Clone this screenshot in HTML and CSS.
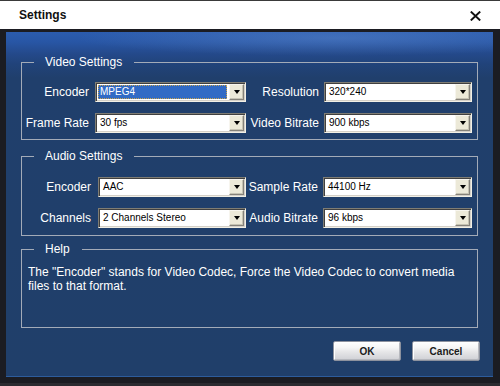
FILE: index.html
```html
<!DOCTYPE html>
<html lang="en">
<head>
    <meta charset="UTF-8">
    <meta name="viewport" content="width=device-width, initial-scale=1.0">
    <title>Settings</title>
    <link rel="stylesheet" href="styles.css">
</head>
<body>
    <div class="window">
        <div class="titlebar">
            <span class="title">Settings</span>
            <svg class="close" width="11" height="10" viewBox="0 0 11 10">
                <path d="M0.8 0.6 L10.2 9.4 M10.2 0.6 L0.8 9.4" stroke="#111" stroke-width="2" fill="none"/>
            </svg>
        </div>
        <div class="frame">
            <div class="content">
                <fieldset class="group video">
                    <legend>Video Settings</legend>
                    <div class="grid">
                        <label>Encoder</label>
                        <div class="combo"><span class="value focused">MPEG4</span><span class="drop"></span></div>
                        <label>Resolution</label>
                        <div class="combo"><span class="value">320*240</span><span class="drop"></span></div>
                        <label>Frame Rate</label>
                        <div class="combo"><span class="value">30 fps</span><span class="drop"></span></div>
                        <label>Video Bitrate</label>
                        <div class="combo"><span class="value">900 kbps</span><span class="drop"></span></div>
                    </div>
                </fieldset>

                <fieldset class="group audio">
                    <legend>Audio Settings</legend>
                    <div class="grid">
                        <label>Encoder</label>
                        <div class="combo"><span class="value">AAC</span><span class="drop"></span></div>
                        <label>Sample Rate</label>
                        <div class="combo"><span class="value">44100 Hz</span><span class="drop"></span></div>
                        <label>Channels</label>
                        <div class="combo"><span class="value">2 Channels Stereo</span><span class="drop"></span></div>
                        <label>Audio Bitrate</label>
                        <div class="combo"><span class="value">96 kbps</span><span class="drop"></span></div>
                    </div>
                </fieldset>

                <fieldset class="group help">
                    <legend>Help</legend>
                    <p class="help-text">The "Encoder" stands for Video Codec, Force the Video Codec to convert media<br>files to that format.</p>
                </fieldset>

                <div class="buttons">
                    <button class="btn">OK</button>
                    <button class="btn">Cancel</button>
                </div>
            </div>
        </div>
    </div>
</body>
</html>
```

FILE: styles.css
```css
body {
    margin: 0;
    background-color: #2b2b30;
    font-family: 'Liberation Sans', Arial, sans-serif;
}
.window {
    width: 500px;
    height: 386px;
    overflow: hidden;
}
.titlebar {
    height: 29px;
    box-sizing: border-box;
    border-top: 1px solid #3a3a3a;
    background-color: #ffffff;
    display: flex;
    align-items: center;
    justify-content: space-between;
    padding: 0 19px 0 19px;
}
.title {
    font-size: 12px;
    font-weight: bold;
    color: #111;
}
.close {
    display: block;
    margin-top: 1px;
}
.frame {
    background-color: #1b1c22;
    padding: 3px 7px 6px 6px;
}
.content {
    height: 345px;
    box-sizing: border-box;
    padding-top: 23px;
    border-bottom: 1px solid #2d5c9c;
    background:
        radial-gradient(ellipse 260px 18px at 330px 6px, rgba(130, 170, 230, 0.28), transparent),
        linear-gradient(180deg, #2b5cae 0px, #2856a5 10px, #24498a 22px, #21437a 32px, #203f6c 46px, #203f6a 100%);
}
/* group boxes */
.group {
    margin: 0 15px;
    padding: 0;
    border: 1px solid #a3abb8;
    min-inline-size: 0;
}
.group legend {
    margin-left: 12px;
    padding: 0 12px 0 11px;
    font-size: 12px;
    line-height: 14px;
    color: #ffffff;
}
.audio { margin-top: 9px; }
.help { margin-top: 6px; }
.grid {
    display: grid;
    grid-template-columns: 73px 151px 78px 148px;
    grid-auto-rows: 20px;
    row-gap: 11px;
    align-items: center;
    padding: 13px 0 6px;
}
.audio .grid {
    grid-template-columns: 76px 148px 77px 149px;
    padding: 14px 0 7px;
}
.grid label {
    text-align: right;
    padding-right: 6px;
    font-size: 12px;
    color: #ffffff;
    white-space: nowrap;
}
.grid label:nth-of-type(even) { padding-right: 5px; }
.audio .grid label:nth-of-type(odd) { padding-right: 7px; }
/* combo boxes */
.combo {
    height: 20px;
    box-sizing: border-box;
    display: flex;
    padding: 1px;
    background-color: #ffffff;
    border: 1px solid;
    border-color: #7f7d74 #f2f0e6 #f2f0e6 #7f7d74;
    box-shadow: inset 1px 1px 0 #404040, inset -1px -1px 0 #d4d0c8;
}
.value {
    flex: 1;
    margin: 1px 2px 1px 1px;
    padding-left: 2px;
    font-size: 10px;
    line-height: 14px;
    color: #000;
    white-space: nowrap;
}
.value.focused {
    background-color: #316ac5;
    color: #ffffff;
    border: 1px dotted #c9a24e;
    line-height: 12px;
    padding-left: 1px;
}
.drop {
    width: 15px;
    box-sizing: border-box;
    display: flex;
    align-items: center;
    justify-content: center;
    background-color: #ece9d8;
    border: 1px solid;
    border-color: #f7f5ee #85827a #85827a #f7f5ee;
    box-shadow: inset -1px -1px 0 #c6c3b4;
}
.drop::after {
    content: '';
    border-style: solid;
    border-width: 4px 3.5px 0;
    border-color: #000 transparent transparent;
}
/* help box */
.help-text {
    margin: 0;
    height: 71px;
    box-sizing: border-box;
    padding: 9px 6px 0;
    font-size: 12px;
    line-height: 14px;
    color: #ffffff;
    white-space: nowrap;
}
/* dialog buttons */
.buttons {
    display: flex;
    justify-content: flex-end;
    gap: 11px;
    margin-top: 13px;
    padding-right: 13px;
}
.btn {
    width: 68px;
    height: 20px;
    padding: 0;
    border: 1px solid #8d929e;
    border-radius: 2px;
    background: linear-gradient(180deg, #ffffff 0%, #f6f6f6 30%, #e6e6e8 55%, #cfd0d5 100%);
    box-shadow: inset 1px 1px 0 #ffffff, inset -1px -1px 0 #b6b8be;
    font-family: 'Liberation Sans', Arial, sans-serif;
    font-size: 10px;
    font-weight: bold;
    color: #1a1a1a;
}
```
